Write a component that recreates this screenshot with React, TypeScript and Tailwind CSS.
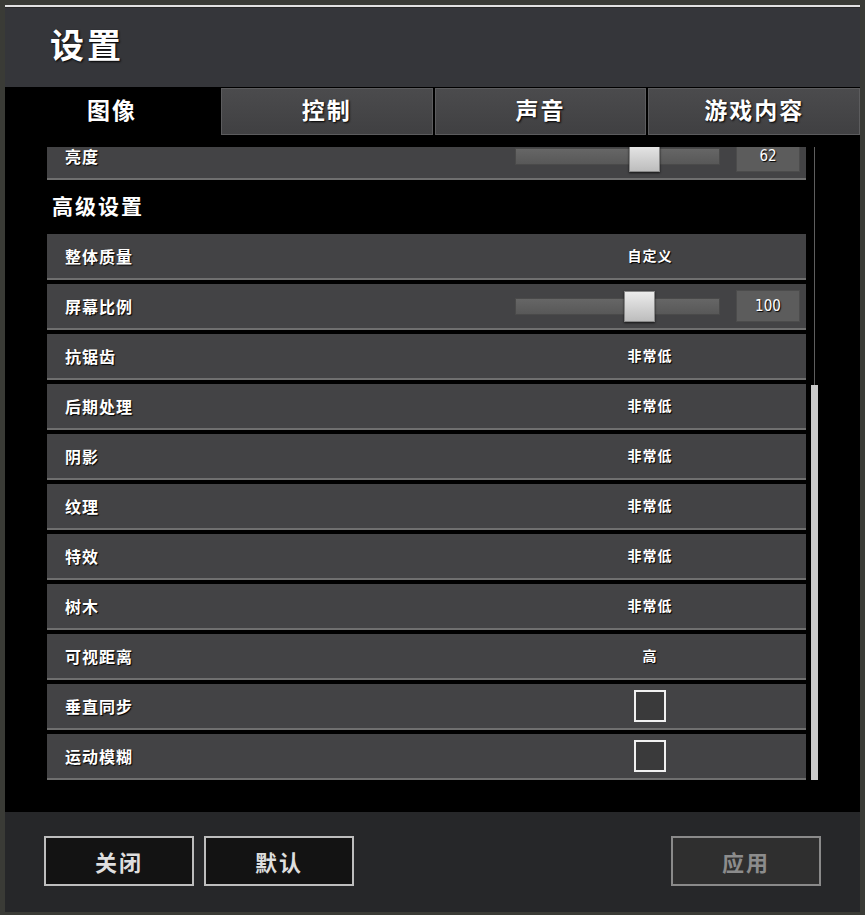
import React from 'react';

type Row = {
  label: string;
  kind: 'text' | 'slider' | 'check';
  value?: string;
  thumb?: number;
};

const rows: Row[] = [
  { label: '整体质量', kind: 'text', value: '自定义' },
  { label: '屏幕比例', kind: 'slider', value: '100', thumb: 108 },
  { label: '抗锯齿', kind: 'text', value: '非常低' },
  { label: '后期处理', kind: 'text', value: '非常低' },
  { label: '阴影', kind: 'text', value: '非常低' },
  { label: '纹理', kind: 'text', value: '非常低' },
  { label: '特效', kind: 'text', value: '非常低' },
  { label: '树木', kind: 'text', value: '非常低' },
  { label: '可视距离', kind: 'text', value: '高' },
  { label: '垂直同步', kind: 'check' },
  { label: '运动模糊', kind: 'check' },
];

const tabs = ['图像', '控制', '声音', '游戏内容'];

const Slider = ({ value, thumb }: { value: string; thumb: number }) => (
  <div className="flex items-center gap-[16px]">
    <div className="relative w-[205px] h-[17px] bg-gradient-to-b from-[#666] to-[#585858] border border-[#4a4a4a]">
      <div
        className="absolute top-[-8px] w-[31px] h-[31px] bg-gradient-to-b from-[#ececec] to-[#bdbdbd] border border-[#888] shadow-[0_1px_2px_rgba(0,0,0,0.7)]"
        style={{ left: thumb }}
      />
    </div>
    <div className="w-[64px] h-[32px] bg-[#5c5c5c] border border-[#4c4c4c] flex items-center justify-center text-[15px] text-white font-['DejaVu_Sans_Condensed',sans-serif] [text-shadow:1px_1px_1px_#000]">
      {value}
    </div>
  </div>
);

const SettingRow = ({ row }: { row: Row }) => (
  <div className="h-[46px] shrink-0 flex items-center bg-[#434345] border-b-2 border-[#6f6f6f]">
    <div className="w-[468px] pl-[18px] pb-[1px] text-[16px] font-bold tracking-[1px] text-white [text-shadow:1px_1px_1px_#000]">
      {row.label}
    </div>
    {row.kind === 'slider' ? (
      <Slider value={row.value!} thumb={row.thumb!} />
    ) : (
      <div className="w-[270px] flex justify-center">
        {row.kind === 'check' ? (
          <div className="w-[32px] h-[32px] border-2 border-[#f0f0f0] bg-[#3a3a3b]" />
        ) : (
          <span className="pb-[1px] text-[14px] font-bold tracking-[1px] text-white [text-shadow:1px_1px_1px_#000]">{row.value}</span>
        )}
      </div>
    )}
  </div>
);

export default function App() {
  return (
    <div className="w-[865px] h-[915px] bg-[#3a3b36] px-[5px] pt-[5px] overflow-hidden font-['Noto_Sans_CJK_SC',sans-serif]">
      <div className="h-[2px] bg-[#e2e2e2]" />
      <div className="h-[1px] bg-[#2a2a2a]" />

      {/* Header */}
      <div className="h-[79px] bg-[#35363a] flex items-center pl-[45px] pb-[8px]">
        <h1 className="text-[34px] font-bold tracking-[3px] text-white leading-none [text-shadow:1px_1px_2px_#000]">设置</h1>
      </div>

      {/* Tabs */}
      <div className="h-[49px] bg-black grid grid-cols-[214px_1fr_1fr_1fr] gap-[2px] pt-[1px] pb-[1px]">
        {tabs.map((t, i) => (
          <div
            key={t}
            className={
              i === 0
                ? 'bg-black flex items-center justify-center pb-[4px] text-[23px] font-bold tracking-[2px] text-white'
                : 'bg-gradient-to-b from-[#4b4b4d] to-[#404042] border border-[#5c5c5e] flex items-center justify-center pb-[4px] text-[23px] font-bold tracking-[2px] text-white [text-shadow:1px_1px_2px_#000]'
            }
          >
            {t}
          </div>
        ))}
      </div>

      {/* Content */}
      <div className="h-[676px] bg-black pt-[11px] pl-[42px] flex gap-[5px]">
        <div className="w-[759px] h-[633px] overflow-hidden">
          <div className="flex flex-col gap-[4px] -mt-[13px]">
            <div className="h-[46px] shrink-0 flex items-center bg-[#434345] border-b-2 border-[#6f6f6f]">
              <div className="w-[468px] pl-[18px] pt-[14px] self-start leading-none text-[16px] font-bold tracking-[1px] text-white [text-shadow:1px_1px_1px_#000]">
                亮度
              </div>
              <Slider value="62" thumb={113} />
            </div>
            <div className="h-[46px] shrink-0 flex items-center pl-[5px] pb-[2px] text-[21px] font-bold tracking-[2px] text-white">
              高级设置
            </div>
            {rows.map((r) => (
              <SettingRow key={r.label} row={r} />
            ))}
          </div>
        </div>
        {/* Scrollbar */}
        <div className="w-[7px] h-[633px] flex flex-col items-center">
          <div className="w-px h-[238px] bg-[#5e5e5e]" />
          <div className="w-[7px] flex-1 bg-[#c9c9c9]" />
        </div>
      </div>

      {/* Footer */}
      <div className="h-[100px] bg-[#262729] flex items-center px-[39px] pb-[2px]">
        <button className="w-[150px] h-[50px] bg-[#131313] border-2 border-[#bdbdbd] text-[22px] font-bold tracking-[2px] text-[#dedede]">
          关闭
        </button>
        <button className="ml-[10px] w-[150px] h-[50px] bg-[#131313] border-2 border-[#bdbdbd] text-[22px] font-bold tracking-[2px] text-[#dedede]">
          默认
        </button>
        <button className="ml-auto w-[150px] h-[50px] bg-[#2f2f2f] border-2 border-[#8a8a8a] text-[22px] font-bold tracking-[2px] text-[#8c8c8c]">
          应用
        </button>
      </div>
    </div>
  );
}
